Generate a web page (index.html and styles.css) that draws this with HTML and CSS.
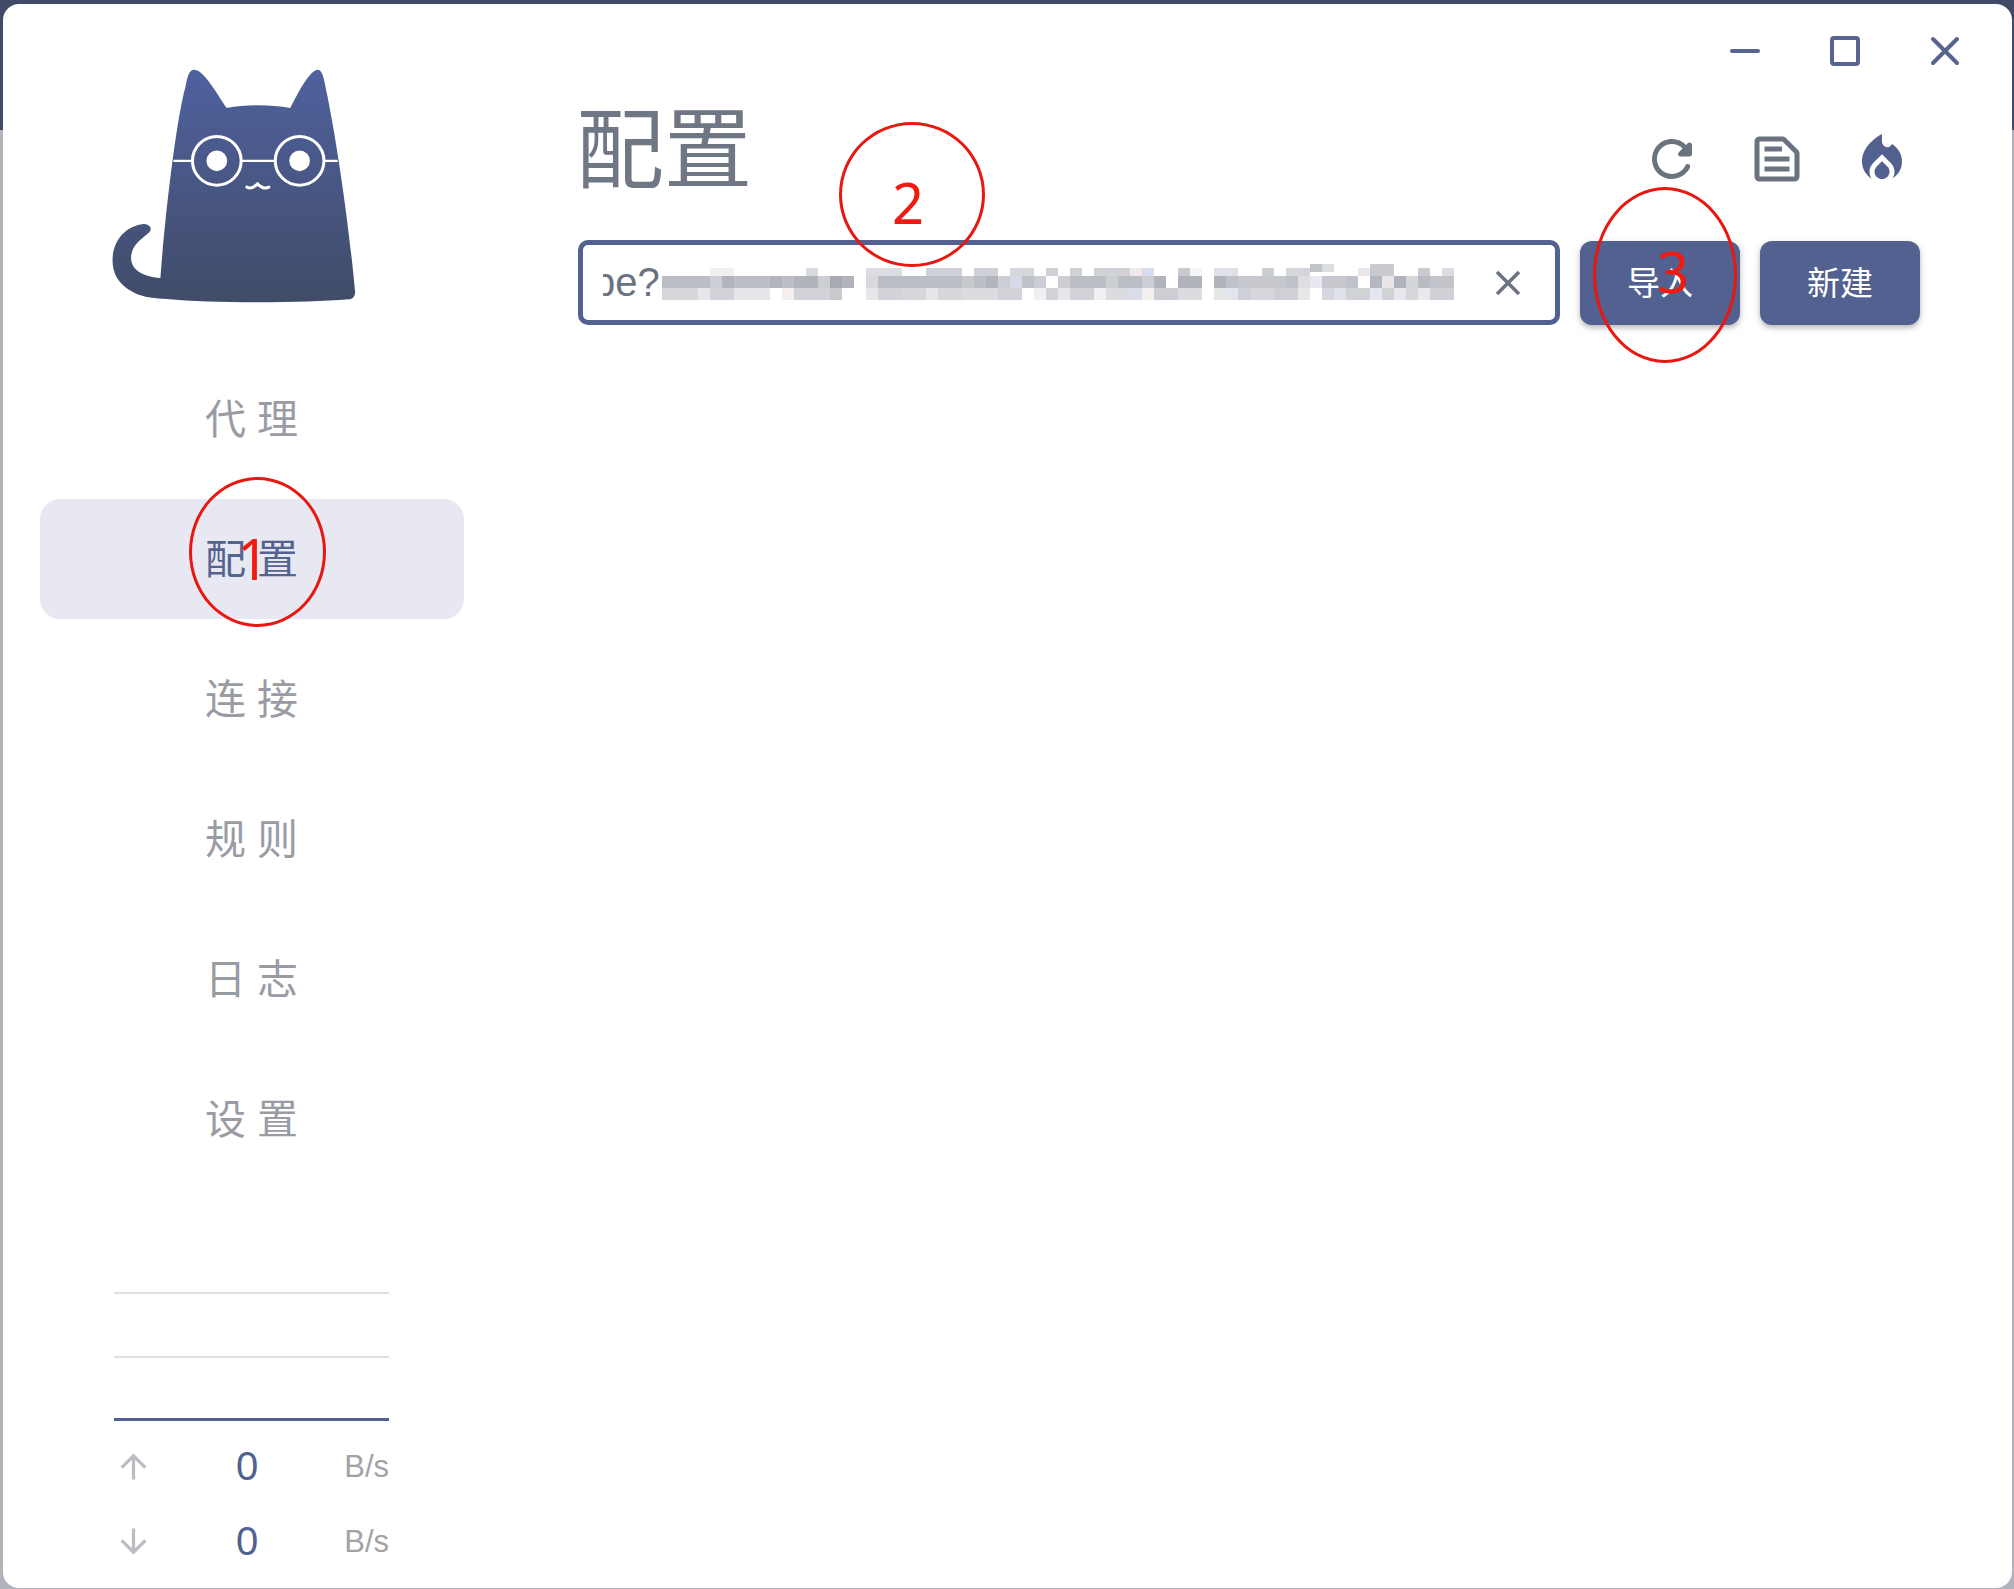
FILE: index.html
```html
<!DOCTYPE html>
<html lang="zh-CN">
<head>
    <meta charset="UTF-8">
    <meta name="viewport" content="width=device-width, initial-scale=1.0">
    <title>配置</title>
    <link rel="stylesheet" href="styles.css">
</head>
<body>
    <div class="window">
        <aside class="sidebar">
            <svg class="logo" viewBox="330 200 740 710">
                <defs>
                    <linearGradient id="catfill" x1="0" y1="0" x2="0" y2="1">
                        <stop offset="0" stop-color="#4f619f"/>
                        <stop offset="1" stop-color="#414c68"/>
                    </linearGradient>
                </defs>
                <path fill="url(#catfill)" d="M580 208C610 205 650 280 680 323C740 312 810 312 870 323C895 275 925 215 950 208C968 206 972 240 980 280C1020 480 1050 720 1064 870C1066 885 1058 895 1045 896C900 908 640 908 500 895C470 893 430 892 400 875C350 850 335 810 338 770C342 710 385 675 430 670C448 670 458 682 448 695C430 712 395 730 393 770C393 810 430 828 481 832C495 640 530 350 556 260C562 225 568 210 580 208Z"/>
                <g fill="none" stroke="#fff" stroke-width="9">
                    <circle cx="650" cy="481" r="73"/>
                    <circle cx="898" cy="481" r="73"/>
                    <path stroke-width="7" d="M520 481H577M725 481H825M972 481H1012"/>
                    <path stroke-linecap="round" d="M740 560C752 566 762 560 772 550C782 560 795 566 806 560"/>
                </g>
                <circle cx="650" cy="481" r="31" fill="#fff"/>
                <circle cx="898" cy="481" r="31" fill="#fff"/>
            </svg>

            <nav class="nav">
                <a class="nav-item">代理</a>
                <a class="nav-item active">配置</a>
                <a class="nav-item">连接</a>
                <a class="nav-item">规则</a>
                <a class="nav-item">日志</a>
                <a class="nav-item">设置</a>
            </nav>

            <div class="traffic">
                <div class="graph"></div>
                <div class="speed">
                    <svg class="arrow" viewBox="0 0 24 24"><path d="M4 12l1.41 1.41L11 7.83V20h2V7.83l5.58 5.59L20 12l-8-8-8 8z"/></svg>
                    <span class="speed-num">0</span>
                    <span class="speed-unit">B/s</span>
                </div>
                <div class="speed">
                    <svg class="arrow" viewBox="0 0 24 24"><path d="M20 12l-1.41-1.41L13 16.17V4h-2v12.17l-5.58-5.59L4 12l8 8 8-8z"/></svg>
                    <span class="speed-num">0</span>
                    <span class="speed-unit">B/s</span>
                </div>
            </div>
        </aside>

        <main class="main">
            <div class="titlebar">
                <button class="win-btn"><svg viewBox="0 0 30 30"><path d="M2 15H28"/></svg></button>
                <button class="win-btn"><svg viewBox="0 0 30 30"><rect x="2" y="2" width="26" height="26" rx="2"/></svg></button>
                <button class="win-btn"><svg viewBox="0 0 30 30"><path d="M3 3L27 27M27 3L3 27"/></svg></button>
            </div>

            <div class="page-head">
                <h1>配置</h1>
                <div class="head-icons">
                    <svg class="icon" viewBox="0 0 24 24"><path d="M17.65 6.35c-1.63-1.63-3.94-2.57-6.48-2.31-3.67.37-6.69 3.35-7.1 7.02C3.52 15.91 7.27 20 12 20c3.19 0 5.93-1.87 7.21-4.56.32-.67-.16-1.44-.9-1.44-.37 0-.72.2-.88.53-1.13 2.43-3.84 3.97-6.8 3.31-2.22-.49-4.01-2.3-4.48-4.52C5.31 9.44 8.26 6 12 6c1.66 0 3.14.69 4.22 1.78l-1.51 1.51c-.63.63-.19 1.71.7 1.71H19c.55 0 1-.45 1-1V6.41c0-.89-1.08-1.34-1.71-.71l-.64.65z"/></svg>
                    <svg class="icon" viewBox="0 0 24 24"><path d="M14.17 5L19 9.83V19H5V5h9.17m0-2H5c-1.1 0-2 .9-2 2v14c0 1.1.9 2 2 2h14c1.1 0 2-.9 2-2V9.83c0-.53-.21-1.04-.59-1.41l-4.83-4.83c-.37-.38-.88-.59-1.41-.59zM7 15h10v2H7v-2zm0-4h10v2H7v-2zm0-4h7v2H7V7z"/></svg>
                    <svg class="icon primary" viewBox="0 0 24 24"><path d="M12 12.9l-2.13 2.09C9.31 15.55 9 16.28 9 17.06 9 18.68 10.35 20 12 20s3-1.32 3-2.94c0-.78-.31-1.52-.87-2.07L12 12.9z"/><path d="M16 6l-.44.55C14.38 8.02 12 7.08 12 5V2S4 6 4 13c0 2.92 1.56 5.47 3.89 6.86-.56-.79-.89-1.76-.89-2.8 0-1.32.52-2.56 1.47-3.5L12 10.1l3.53 3.47c.95.93 1.47 2.17 1.47 3.5 0 1.02-.31 1.96-.85 2.75 1.89-1.15 3.29-3.06 3.71-5.3.66-3.51-1.05-6.81-3.86-8.52z"/></svg>
                </div>
            </div>

            <div class="import-row">
                <div class="url-box">
                    <div class="url-clip"><span class="url-text">pe?</span></div>
                    <svg class="clear" viewBox="0 0 26 26"><path d="M2 2L24 24M24 2L2 24"/></svg>
                    <!-- blurred subscription link -->
                    <svg class="mosaic" viewBox="0 0 792 36">
                        <g stroke-width="8">
                            <path stroke="#f0f0f3" d="M48 8h24"/>
                            <path stroke="#d8dae2" d="M144 8h12"/>
                            <path stroke="#dcdde2" d="M204 8h36"/>
                            <path stroke="#cfd1d8" d="M264 8h36"/>
                            <path stroke="#d0d1d7" d="M312 8h24"/>
                            <path stroke="#d5d7dd" d="M348 8h24"/>
                            <path stroke="#d0d2d8" d="M384 8h12M408 8h12"/>
                            <path stroke="#d0d2d8" d="M432 8h36"/>
                            <path stroke="#f0e8ea" d="M468 8h12"/>
                            <path stroke="#d8dcee" d="M480 8h12"/>
                            <path stroke="#c8cbd2" d="M516 8h12"/>
                            <path stroke="#f3f7f7" d="M528 8h12"/>
                            <path stroke="#dfe0e8" d="M552 8h24"/>
                            <path stroke="#cacdd2" d="M600 8h12"/>
                            <path stroke="#d5d6db" d="M624 8h24"/>
                            <path stroke="#ece6ea" d="M696 8h12"/>
                            <path stroke="#c8cad0" d="M708 8h24"/>
                            <path stroke="#c8cbd1" d="M756 8h12"/>
                            <path stroke="#dbdce2" d="M780 8h12"/>
                        </g>
                        <g stroke-width="8">
                            <path stroke="#c0c3c9" d="M648 4h12"/>
                            <path stroke="#dcdde0" d="M660 4h12"/>
                            <path stroke="#c8cad0" d="M708 4h24"/>
                        </g>
                        <g stroke-width="12">
                            <path stroke="#bcbec6" d="M0 18h48M72 18h36M120 18h12M216 18h84M312 18h12M408 18h36M456 18h24"/>
                            <path stroke="#ccced3" d="M48 18h12M156 18h24M336 18h12M372 18h12M396 18h12M444 18h12M480 18h12"/>
                            <path stroke="#b2b4bb" d="M60 18h12M108 18h12M132 18h24M180 18h12M324 18h12M492 18h12M516 18h12M528 18h12M552 18h12"/>
                            <path stroke="#d8d9dc" d="M204 18h12"/>
                            <path stroke="#c6c8ce" d="M300 18h12M576 18h36M612 18h12M660 18h12M672 18h24"/>
                            <path stroke="#d5d9ea" d="M348 18h12"/>
                            <path stroke="#bfc2c9" d="M360 18h12M564 18h12M624 18h12M684 18h12"/>
                            <path stroke="#a8aab1" d="M168 18h12"/>
                            <path stroke="#e0dde0" d="M636 18h12"/>
                            <path stroke="#e8e8f0" d="M648 18h12"/>
                            <path stroke="#b4b7bf" d="M708 18h12"/>
                            <path stroke="#e8e6ea" d="M720 18h12"/>
                            <path stroke="#b0b3ba" d="M732 18h12"/>
                            <path stroke="#d5d6d9" d="M744 18h12"/>
                            <path stroke="#b9bcc3" d="M756 18h12"/>
                            <path stroke="#c2c4ca" d="M768 18h24"/>
                        </g>
                        <g stroke-width="12">
                            <path stroke="#d5d7da" d="M0 30h36M240 30h24M276 30h24"/>
                            <path stroke="#e6e7ea" d="M36 30h12M72 30h36M204 30h12M264 30h12M396 30h12"/>
                            <path stroke="#d2d3d8" d="M48 30h24M132 30h36M216 30h24M336 30h24M384 30h12M408 30h12M420 30h12"/>
                            <path stroke="#f5eeee" d="M120 30h12"/>
                            <path stroke="#c8cace" d="M168 30h12"/>
                            <path stroke="#dadce0" d="M300 30h36M444 30h24M504 30h12M516 30h24"/>
                            <path stroke="#f0f0f2" d="M372 30h12M432 30h12"/>
                            <path stroke="#dadcea" d="M468 30h12"/>
                            <path stroke="#f5f0f0" d="M480 30h12"/>
                            <path stroke="#ccced3" d="M492 30h24"/>
                            <path stroke="#e2e4ee" d="M564 30h12"/>
                            <path stroke="#cfd0d5" d="M576 30h12M612 30h24"/>
                            <path stroke="#e6e8e8" d="M636 30h12M552 30h12"/>
                            <path stroke="#d5d7dc" d="M660 30h12M588 30h24"/>
                            <path stroke="#e0e2ea" d="M672 30h12"/>
                            <path stroke="#d0d3d6" d="M684 30h24"/>
                            <path stroke="#e4e6f0" d="M708 30h12"/>
                            <path stroke="#d0d2d6" d="M720 30h12"/>
                            <path stroke="#e6e8ee" d="M732 30h12"/>
                            <path stroke="#d5d7da" d="M744 30h12"/>
                            <path stroke="#e8e9ea" d="M756 30h12"/>
                            <path stroke="#d0d1d6" d="M768 30h24"/>
                        </g>
                    </svg>
                </div>
                <button class="btn">导入</button>
                <button class="btn">新建</button>
            </div>
        </main>
    </div>

    <!-- hand drawn notes on top of the screenshot -->
    <div class="mark mark-1"></div>
    <div class="mark mark-2"></div>
    <div class="mark mark-3"></div>
    <span class="note note-1">1</span>
    <span class="note note-2">2</span>
    <span class="note note-3">3</span>
</body>
</html>
```

FILE: styles.css
```css
*{
    margin: 0;
    padding: 0;
    box-sizing: border-box;
}
body{
    position: relative;
    height: 1589px;
    overflow: hidden;
    padding: 4px 2px 1px 3px;
    background: linear-gradient(#414a66 0 130px, #b0b3ba 130px);
    font-family: "Liberation Sans", "Noto Sans CJK SC", sans-serif;
}
.window{
    display: flex;
    height: 100%;
    background-color: white;
    border-radius: 16px;
}

/* sidebar */
.sidebar{
    display: flex;
    flex-direction: column;
    width: 575px;
    padding: 63px 0 0 37px;
}
.logo{
    width: 247px;
    height: 237px;
    margin-left: 70px;
}
.nav{
    display: flex;
    flex-direction: column;
    gap: 20px;
    width: 424px;
    margin-top: 55px;
}
.nav-item{
    height: 120px;
    padding: 1px 0 0 10px;
    line-height: 120px;
    text-align: center;
    font-size: 41px;
    letter-spacing: 11px;
    color: #9a9ca3;
    border-radius: 20px;
}
.nav-item.active{
    background-color: #e8e8f2;
    color: #55648f;
}
.traffic{
    width: 275px;
    margin: auto 0 0 74px;
    padding-bottom: 9px;
}
.graph{
    height: 129px;
    margin-bottom: 8px;
    background:
        linear-gradient(#dfe0e4, #dfe0e4) 0 0 / 100% 2px no-repeat,
        linear-gradient(#dfe0e4, #dfe0e4) 0 64px / 100% 2px no-repeat;
    border-bottom: 3px solid #52618f;
}
.speed{
    display: grid;
    grid-template-columns: 39px 1fr 48px;
    align-items: center;
    height: 75px;
}
.arrow{
    width: 39px;
    height: 39px;
    fill: #bbbcc0;
}
.speed-num{
    text-align: center;
    font-size: 40px;
    color: #52618f;
}
.speed-unit{
    text-align: right;
    font-size: 31px;
    color: #a2a3a6;
}

/* main */
.main{
    flex: 1;
    padding-right: 92px;
}
.titlebar{
    display: flex;
    justify-content: flex-end;
    height: 92px;
    margin-right: -75px;
}
.win-btn{
    display: flex;
    align-items: center;
    justify-content: center;
    width: 100px;
    padding-top: 2px;
    background: none;
    border: none;
}
.win-btn svg{
    width: 30px;
    height: 30px;
    fill: none;
    stroke: #566490;
    stroke-width: 4;
    stroke-linecap: round;
}
.page-head{
    display: flex;
    justify-content: space-between;
    align-items: center;
    height: 144px;
    padding-right: 8px;
}
h1{
    font-size: 88px;
    font-weight: normal;
    line-height: 1;
    color: #6f7684;
    margin: -34px 0 0 -2px;
}
.head-icons{
    display: flex;
    gap: 45px;
    margin-top: -18px;
}
.icon{
    width: 60px;
    height: 60px;
    fill: #6b7280;
}
.icon.primary{
    fill: #52618f;
}
.import-row{
    display: flex;
    gap: 20px;
}
.url-box{
    position: relative;
    display: flex;
    align-items: center;
    flex: 1;
    height: 85px;
    padding-left: 20px;
    border: 5px solid #52618f;
    border-radius: 10px;
}
.url-clip{
    width: 63px;
    overflow: hidden;
}
.url-text{
    display: block;
    margin-left: -10px;
    font-size: 40px;
    color: #6b7280;
}
.clear{
    position: absolute;
    right: 34px;
    top: 25px;
    width: 26px;
    height: 26px;
    fill: none;
    stroke: #6b7280;
    stroke-width: 3.5;
}
.mosaic{
    position: absolute;
    left: 79px;
    top: 19px;
    width: 792px;
    height: 36px;
}
.btn{
    width: 160px;
    height: 84px;
    margin-top: 1px;
    padding-bottom: 4px;
    font-family: inherit;
    font-size: 33px;
    color: white;
    background-color: #52618f;
    border: none;
    border-radius: 12px;
    box-shadow: 0 3px 5px rgba(0,0,0,.2), 0 2px 10px rgba(0,0,0,.1);
}

/* notes */
.mark{
    position: absolute;
    border: 3px solid #e8170f;
    border-radius: 50%;
}
.mark-1{
    left: 189px;
    top: 477px;
    width: 137px;
    height: 150px;
}
.mark-2{
    left: 839px;
    top: 122px;
    width: 146px;
    height: 145px;
}
.mark-3{
    left: 1593px;
    top: 187px;
    width: 144px;
    height: 176px;
}
.note{
    position: absolute;
    font-family: "Noto Sans", sans-serif;
    font-size: 56px;
    line-height: 1;
    color: #f01a10;
}
.note-1{
    left: 237px;
    top: 530px;
}
.note-2{
    left: 892px;
    top: 174px;
}
.note-3{
    left: 1657px;
    top: 243px;
}
```
